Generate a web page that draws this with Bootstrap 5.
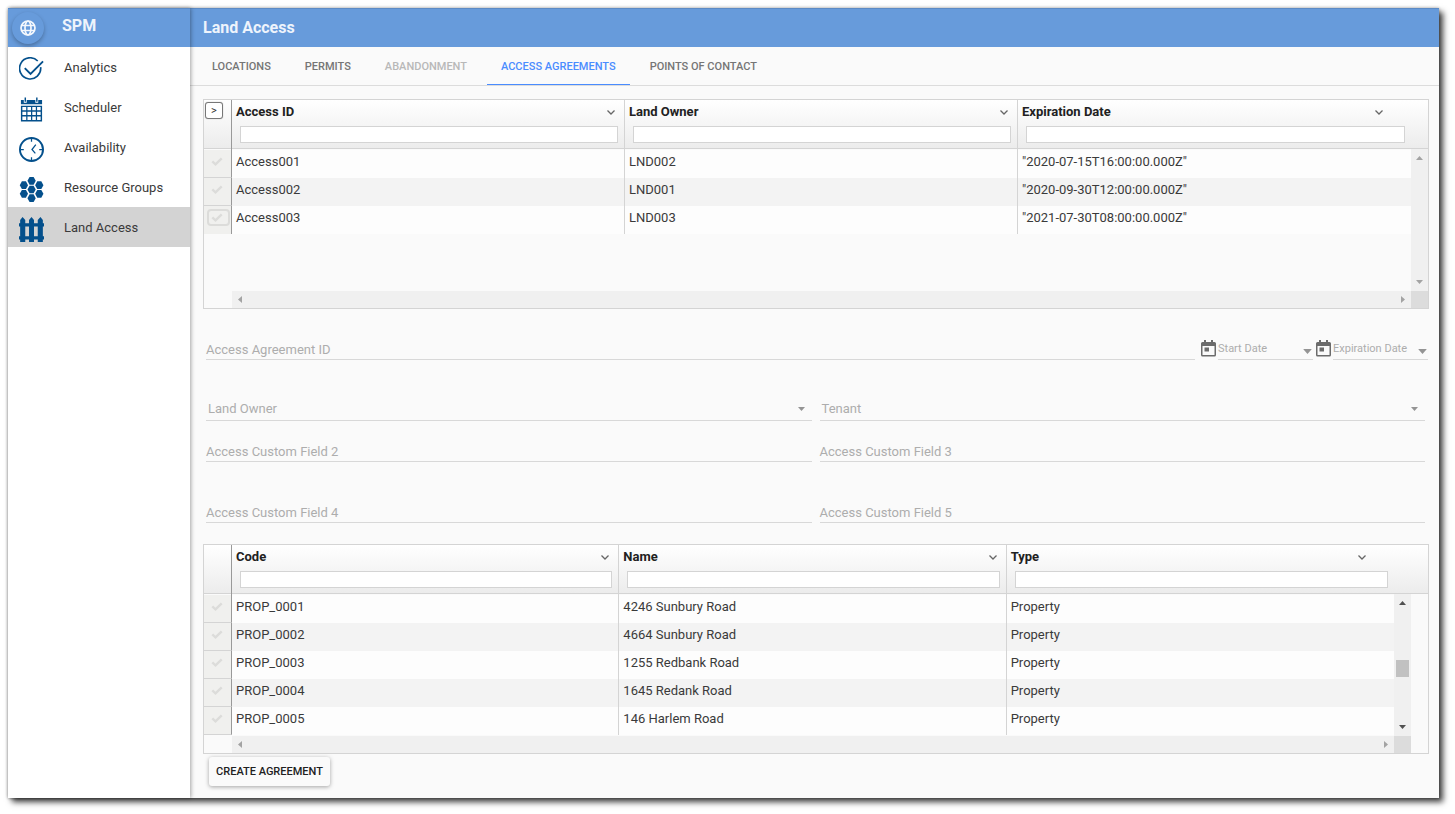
<!DOCTYPE html>
<html lang="en">
<head>
<meta charset="utf-8">
<meta name="viewport" content="width=device-width, initial-scale=1">
<title>SPM - Land Access</title>
<link href="https://cdn.jsdelivr.net/npm/bootstrap@5.3.0/dist/css/bootstrap.min.css" rel="stylesheet">
<style>
  :root { --brand: #679bdb; --icon: #04508c; --line: #d4d4d4; }
  body { font-family: Roboto, "Liberation Sans", sans-serif; font-size: 13px; line-height: 20px; color: #212121; background: #fff; padding: 8px 16px 16px 8px; }
  .app-frame { min-height: calc(100vh - 24px); background: #fafafa; box-shadow: 0 0 3px rgba(0,0,0,.3), 4px 4px 6px rgba(0,0,0,.75); }
  .app-bar { height: 39px; background: var(--brand); color: #eef4fc; border-top: 1px solid #5c8ac4; padding-left: 13px; }
  .side-panel .app-bar { padding-left: 0; }
  .app-bar h1, .app-bar h2 { font-size: 16px; line-height: 20px; font-weight: 700; margin: 0; }

  .side-panel { width: 182px; background: #fff; box-shadow: 1px 0 4px rgba(0,0,0,.35); z-index: 1; }
  .globe-btn { width: 32px; height: 32px; background: var(--brand); border: 0; border-radius: 50%; box-shadow: 0 2px 4px rgba(0,0,0,.28); margin: 0 18px 0 4px; padding: 0; }
  .globe-btn svg { display: block; margin: 0 auto; }
  .side-link { height: 40px; padding-left: 11px; gap: 19px; color: #3a3a3a; text-decoration: none; }
  .side-link:hover { color: #3a3a3a; }
  .side-link span { padding-top: 2px; }
  .side-link svg { width: 25px; height: 25px; margin-top: 4px; margin-right: 1px; color: var(--icon); }
  .side-link.active { background: #d3d3d3; }

  .tab-bar { height: 39px; gap: 6px; padding-left: 8px; border-bottom: 1px solid #dcdcdc; }
  .tab-bar a { font-size: 11px; font-weight: 500; color: #757575; text-decoration: none; padding: 0 14px; line-height: 40px; height: 38px; white-space: nowrap; }
  .tab-bar a.active { color: #4a8cff; border-bottom: 1px solid #4a8cff; }
  .tab-bar a.disabled { color: #b8b8b8; }

  .work-area { padding: 13px 10px 12px 13px; }
  .data-grid { display: grid; grid-template-columns: minmax(0, 1fr) 17px; grid-template-rows: auto 17px; border: 1px solid var(--line);
    background: linear-gradient(#fff 0, #ececec 48px, var(--line) 48px, var(--line) 49px, transparent 49px); }
  .data-grid.inset-bar { grid-template-columns: minmax(0, 1fr) 17px 17px; }
  .grid-body { min-height: 191px; }
  .grid-body table { width: 100%; table-layout: fixed; border-collapse: separate; border-spacing: 0; }
  .grid-body th, .grid-body td { padding: 0; border: 0 solid var(--line); }
  .check-col { width: 28px; }
  .grid-body thead th { height: 50px; vertical-align: top; border-right-width: 1px; }
  .grid-body thead th:last-child { border-right-width: 0; }
  .grid-body .row-mark { border-right: 1px solid #999 !important; }
  .col-title { padding: 2px 7px 0 4px; font-weight: 700; }
  th:last-child .col-title { padding-right: 26px; }
  .filter-box { display: block; width: calc(100% - 14px); height: 17px; margin: 4px 6px 0 8px; padding: 0 4px; border: 1px solid var(--line); background: #fff; font-size: 12px; }
  .menu-btn { width: 12px; height: 12px; padding: 0; border: 0; background: none; color: #666; line-height: 0; margin-bottom: 1px; }
  .grid-body tbody tr { height: 28px; background: #fdfdfd; }
  .grid-body tbody tr:nth-child(even) { background: #f3f3f3; }
  .grid-body tbody td { height: 28px; padding: 0 4px 4px; color: #3a3a3a; border-right-width: 1px; }
  .grid-body tbody td:last-child { border-right-width: 0; }
  .grid-body tbody .row-mark { height: 28px; padding: 0 0 0 3px; background: #f0f0ee; border-bottom-width: 1px; vertical-align: top; }
  .short-list tbody tr:last-child .row-mark { border-bottom-width: 0; }
  .check-btn { display: flex; align-items: center; justify-content: center; width: 23px; height: 17px; margin-top: 3px; padding: 0 3px 0 0; border: 2px solid transparent; border-radius: 4px; background: none; color: #dcdcda; }
  .check-btn.current { border-color: #dcdcda; }
  .expand-btn { display: block; width: 18px; height: 17px; margin: 2px 0 0 1px; padding: 0; border: 1px solid #777; border-radius: 3px; background: #fff; font-size: 11px; line-height: 14px; color: #333; box-shadow: 0 0 1px #999; }
  .bar-v { margin-top: 49px; background: #f0f0f0; color: #a3a3a3; padding: 7px 0; }
  .bar-v.live { color: #505050; }
  .bar-v svg, .bar-h svg { display: block; }
  .bar-thumb { width: 13px; height: 17px; background: #c1c1c1; margin-top: 6px; }
  .bar-h { margin-left: 28px; background: #f0f0f0; color: #a3a3a3; padding: 0 6px; }
  .bar-corner { background: #dcdcdc; }

  .form-line { margin: 0 4px 0 3px; gap: 8px; }
  .form-line.first { margin: 27px 1px 37px 3px; gap: 6px; }
  .form-line.upper { margin-top: 17px; }
  .form-line.lower { margin-top: 37px; margin-bottom: 21px; }
  .md-field { display: flex; flex: 1 1 0; min-width: 0; height: 24px; align-items: center; border-bottom: 1px solid #d8d8d8; color: #adadad; line-height: 20px; }
  .md-field > span, .md-field > label { white-space: nowrap; padding-top: 4px; }
  .md-field.pick { padding: 0 7px 0 2px; }
  .md-field.pick > span { padding-top: 0; }
  .md-field input, .md-field select { flex: 1 1 0; min-width: 0; width: 0; border: 0; padding: 0; background: none; appearance: none; height: 20px; outline: 0; }
  .date-pair { gap: 3px; }
  .date-field { flex: 0 0 95px; font-size: 11px; }
  .date-field > label { padding-top: 2px; }
  .date-wrap { gap: 2px; }
  .caret-btn { border: 0; padding: 0; background: none; line-height: 0; color: #949494; margin: 8px 1px 0 0; }
  .raise-btn { min-width: 121px; height: 29px; margin: 3px 0 0 6px; padding: 0 5px; border: 0; border-radius: 3px; background: #fafafa; color: #212121; font-size: 11px; font-weight: 500; box-shadow: 0 1px 4px rgba(0,0,0,.35); }
</style>
</head>
<body>
<svg class="d-none" aria-hidden="true">
  <symbol id="i-check" viewBox="0 0 12 9"><path d="M1.3 4.3 4.5 7.3 10.7 1.3" fill="none" stroke="currentColor" stroke-width="2.4"/></symbol>
  <symbol id="i-chev" viewBox="0 0 12 12"><path d="M2.5 4.5 6 8 9.500 4.500" fill="none" stroke="currentColor" stroke-width="1.3"/></symbol>
  <symbol id="i-up" viewBox="0 0 7 4"><path d="M0 4 3.500 0 7 4z" fill="currentColor"/></symbol>
  <symbol id="i-down" viewBox="0 0 7 4"><path d="M0 0 3.500 4 7 0z" fill="currentColor"/></symbol>
  <symbol id="i-left" viewBox="0 0 4 7"><path d="M4 0 0 3.500 4 7z" fill="currentColor"/></symbol>
  <symbol id="i-right" viewBox="0 0 4 7"><path d="M0 0 4 3.500 0 7z" fill="currentColor"/></symbol>
  <symbol id="i-date" viewBox="0 0 15 17"><path d="M3 0h2v2h5V0h2v2h1.500A1.500 1.500 0 0 1 15 3.500v11.500a1.500 1.500 0 0 1-1.500 1.500h-12A1.500 1.500 0 0 1 0 15V3.500A1.500 1.500 0 0 1 1.500 2H3zM1.500 6v9h12V6zM3.500 7.500h4.500v4H3.500z" fill="#6b6b6b" fill-rule="evenodd"/></symbol>
</svg>

<div class="app-frame d-flex">
  <aside class="side-panel flex-shrink-0 position-relative">
    <header class="app-bar d-flex align-items-center">
      <button class="globe-btn" type="button" aria-label="Menu">
        <svg width="16" height="16" viewBox="0 0 16 16" fill="none" stroke="#f4f8fd" stroke-width="1.700"><circle cx="8" cy="8" r="7"/><ellipse cx="8" cy="8" rx="3" ry="7"/><path d="M1.500 5.500h13M1.500 10.500h13"/></svg>
      </button>
      <h1 class="pb-1">SPM</h1>
    </header>
    <nav>
      <a class="side-link d-flex align-items-center" href="#">
        <svg viewBox="0 0 26 26" fill="none" stroke="currentColor" stroke-width="1.700"><path d="M19.500 4.200A11 11 0 1 0 22.500 10.500"/><path d="M6 11.500 12 17.500 25 4.500" stroke-width="2"/></svg>
        <span>Analytics</span></a>
      <a class="side-link d-flex align-items-center" href="#">
        <svg viewBox="0 0 26 26" fill="currentColor"><path d="M2 3h3v3h3V3h9v3h3V3h4v4.500H2zM5.800.5h1.500V5H5.800zM17.800.5h1.500V5h-1.500z"/><path fill-rule="evenodd" d="M2 9h22v16.500H2zM3.500 10.500v3.300h4v-3.300zm5.300 0v3.300h3.700v-3.300zm5 0v3.300h3.700v-3.300zm5 0v3.300h3.700v-3.300zM3.500 15.300v3.400h4v-3.400zm5.300 0v3.400h3.700v-3.400zm5 0v3.400h3.700v-3.400zm5 0v3.400h3.700v-3.400zM3.500 20.200v3.600h4v-3.600zm5.300 0v3.600h3.700v-3.600zm5 0v3.600h3.700v-3.600zm5 0v3.600h3.700v-3.600z"/></svg>
        <span>Scheduler</span></a>
      <a class="side-link d-flex align-items-center" href="#">
        <svg viewBox="0 0 26 26" fill="none" stroke="currentColor"><circle cx="13" cy="13" r="12" stroke-width="2"/><path d="M13 2v3M13 21v3M2 13h3M21 13h3M17.500 8l-4 5 3.500 4" stroke-width="1.300"/></svg>
        <span>Availability</span></a>
      <a class="side-link d-flex align-items-center" href="#">
        <svg viewBox="0 0 26 26" fill="currentColor"><path id="hex" d="M11 0h4.200l2.200 4-2.200 4H11L8.800 4z"/><use href="#hex" y="9"/><use href="#hex" y="18"/><use href="#hex" x="-8" y="4.500"/><use href="#hex" x="-8" y="13.500"/><use href="#hex" x="8" y="4.500"/><use href="#hex" x="8" y="13.500"/></svg>
        <span>Resource Groups</span></a>
      <a class="side-link active d-flex align-items-center" href="#" aria-current="page">
        <svg viewBox="0 0 26 26" fill="currentColor"><path d="M0 6.500h26v3.500H0zM0 20h26v3.500H0z"/><path d="M1.200 26V3L3.700 0 6.500 3v23zM10.400 26V3L13 0l2.600 3v23zM19.500 26V3L22.300 0 24.800 3v23z"/></svg>
        <span>Land Access</span></a>
    </nav>
  </aside>

  <main class="flex-fill overflow-hidden">
    <header class="app-bar d-flex align-items-center"><h2>Land Access</h2></header>
    <nav class="tab-bar d-flex">
      <a href="#">LOCATIONS</a>
      <a href="#">PERMITS</a>
      <a href="#" class="disabled" aria-disabled="true">ABANDONMENT</a>
      <a href="#" class="active" aria-current="page">ACCESS AGREEMENTS</a>
      <a href="#">POINTS OF CONTACT</a>
    </nav>

    <div class="work-area">
      <section class="data-grid" aria-label="Access agreements">
        <div class="grid-body short-list">
          <table>
            <thead><tr>
              <th class="check-col row-mark"><button class="expand-btn" type="button" aria-label="Expand">&gt;</button></th>
              <th><div class="col-title d-flex align-items-center justify-content-between">Access ID<button class="menu-btn" type="button" aria-label="Access ID menu"><svg width="12" height="12"><use href="#i-chev"/></svg></button></div><input class="filter-box" aria-label="Filter Access ID"></th>
              <th><div class="col-title d-flex align-items-center justify-content-between">Land Owner<button class="menu-btn" type="button" aria-label="Land Owner menu"><svg width="12" height="12"><use href="#i-chev"/></svg></button></div><input class="filter-box" aria-label="Filter Land Owner"></th>
              <th><div class="col-title d-flex align-items-center justify-content-between">Expiration Date<button class="menu-btn" type="button" aria-label="Expiration Date menu"><svg width="12" height="12"><use href="#i-chev"/></svg></button></div><input class="filter-box" aria-label="Filter Expiration Date"></th>
            </tr></thead>
            <tbody>
              <tr><td class="row-mark"><button class="check-btn" type="button" aria-label="Select Access001"><svg width="12" height="9"><use href="#i-check"/></svg></button></td><td>Access001</td><td>LND002</td><td>"2020-07-15T16:00:00.000Z"</td></tr>
              <tr><td class="row-mark"><button class="check-btn" type="button" aria-label="Select Access002"><svg width="12" height="9"><use href="#i-check"/></svg></button></td><td>Access002</td><td>LND001</td><td>"2020-09-30T12:00:00.000Z"</td></tr>
              <tr><td class="row-mark"><button class="check-btn current" type="button" aria-label="Select Access003"><svg width="12" height="9"><use href="#i-check"/></svg></button></td><td>Access003</td><td>LND003</td><td>"2021-07-30T08:00:00.000Z"</td></tr>
            </tbody>
          </table>
        </div>
        <div class="bar-v d-flex flex-column align-items-center justify-content-between"><svg width="7" height="4"><use href="#i-up"/></svg><svg width="7" height="4"><use href="#i-down"/></svg></div>
        <div class="bar-h d-flex align-items-center justify-content-between"><svg width="4" height="7"><use href="#i-left"/></svg><svg width="4" height="7"><use href="#i-right"/></svg></div>
        <div class="bar-corner"></div>
      </section>

      <form>
        <div class="form-line first d-flex">
          <label class="md-field"><span>Access Agreement ID</span><input type="text"></label>
          <div class="date-pair d-flex">
            <div class="date-wrap d-flex"><svg class="mt-1" width="15" height="17" aria-hidden="true"><use href="#i-date"/></svg><div class="md-field date-field"><label for="start">Start Date</label><input id="start" type="text"><button class="caret-btn" type="button" aria-label="Pick start date"><svg width="9" height="5" viewBox="0 0 7 4"><use href="#i-down"/></svg></button></div></div>
            <div class="date-wrap d-flex"><svg class="mt-1" width="15" height="17" aria-hidden="true"><use href="#i-date"/></svg><div class="md-field date-field"><label for="expires">Expiration Date</label><input id="expires" type="text"><button class="caret-btn" type="button" aria-label="Pick expiration date"><svg width="9" height="5" viewBox="0 0 7 4"><use href="#i-down"/></svg></button></div></div>
          </div>
        </div>
        <div class="form-line d-flex">
          <label class="md-field pick"><span>Land Owner</span><select><option></option></select><svg width="7" height="4" color="#949494"><use href="#i-down"/></svg></label>
          <label class="md-field pick"><span>Tenant</span><select><option></option></select><svg width="7" height="4" color="#949494"><use href="#i-down"/></svg></label>
        </div>
        <div class="form-line upper d-flex">
          <label class="md-field"><span>Access Custom Field 2</span><input type="text"></label>
          <label class="md-field"><span>Access Custom Field 3</span><input type="text"></label>
        </div>
        <div class="form-line lower d-flex">
          <label class="md-field"><span>Access Custom Field 4</span><input type="text"></label>
          <label class="md-field"><span>Access Custom Field 5</span><input type="text"></label>
        </div>

        <section class="data-grid inset-bar" aria-label="Properties">
          <div class="grid-body">
            <table>
              <thead><tr>
                <th class="check-col row-mark"></th>
                <th><div class="col-title d-flex align-items-center justify-content-between">Code<button class="menu-btn" type="button" aria-label="Code menu"><svg width="12" height="12"><use href="#i-chev"/></svg></button></div><input class="filter-box" aria-label="Filter Code"></th>
                <th><div class="col-title d-flex align-items-center justify-content-between">Name<button class="menu-btn" type="button" aria-label="Name menu"><svg width="12" height="12"><use href="#i-chev"/></svg></button></div><input class="filter-box" aria-label="Filter Name"></th>
                <th><div class="col-title d-flex align-items-center justify-content-between">Type<button class="menu-btn" type="button" aria-label="Type menu"><svg width="12" height="12"><use href="#i-chev"/></svg></button></div><input class="filter-box" aria-label="Filter Type"></th>
              </tr></thead>
              <tbody>
                <tr><td class="row-mark"><button class="check-btn" type="button" aria-label="Select PROP_0001"><svg width="12" height="9"><use href="#i-check"/></svg></button></td><td>PROP_0001</td><td>4246 Sunbury Road</td><td>Property</td></tr>
                <tr><td class="row-mark"><button class="check-btn" type="button" aria-label="Select PROP_0002"><svg width="12" height="9"><use href="#i-check"/></svg></button></td><td>PROP_0002</td><td>4664 Sunbury Road</td><td>Property</td></tr>
                <tr><td class="row-mark"><button class="check-btn" type="button" aria-label="Select PROP_0003"><svg width="12" height="9"><use href="#i-check"/></svg></button></td><td>PROP_0003</td><td>1255 Redbank Road</td><td>Property</td></tr>
                <tr><td class="row-mark"><button class="check-btn" type="button" aria-label="Select PROP_0004"><svg width="12" height="9"><use href="#i-check"/></svg></button></td><td>PROP_0004</td><td>1645 Redank Road</td><td>Property</td></tr>
                <tr><td class="row-mark"><button class="check-btn" type="button" aria-label="Select PROP_0005"><svg width="12" height="9"><use href="#i-check"/></svg></button></td><td>PROP_0005</td><td>146 Harlem Road</td><td>Property</td></tr>
              </tbody>
            </table>
          </div>
          <div class="bar-v live d-flex flex-column align-items-center justify-content-between"><svg width="7" height="4"><use href="#i-up"/></svg><div class="bar-thumb"></div><svg width="7" height="4"><use href="#i-down"/></svg></div>
          <div></div>
          <div class="bar-h d-flex align-items-center justify-content-between"><svg width="4" height="7"><use href="#i-left"/></svg><svg width="4" height="7"><use href="#i-right"/></svg></div>
          <div class="bar-corner"></div>
        </section>
        <button class="raise-btn" type="button">CREATE AGREEMENT</button>
      </form>
    </div>
  </main>
</div>
<script src="https://cdn.jsdelivr.net/npm/bootstrap@5.3.0/dist/js/bootstrap.bundle.min.js"></script>
</body>
</html>
